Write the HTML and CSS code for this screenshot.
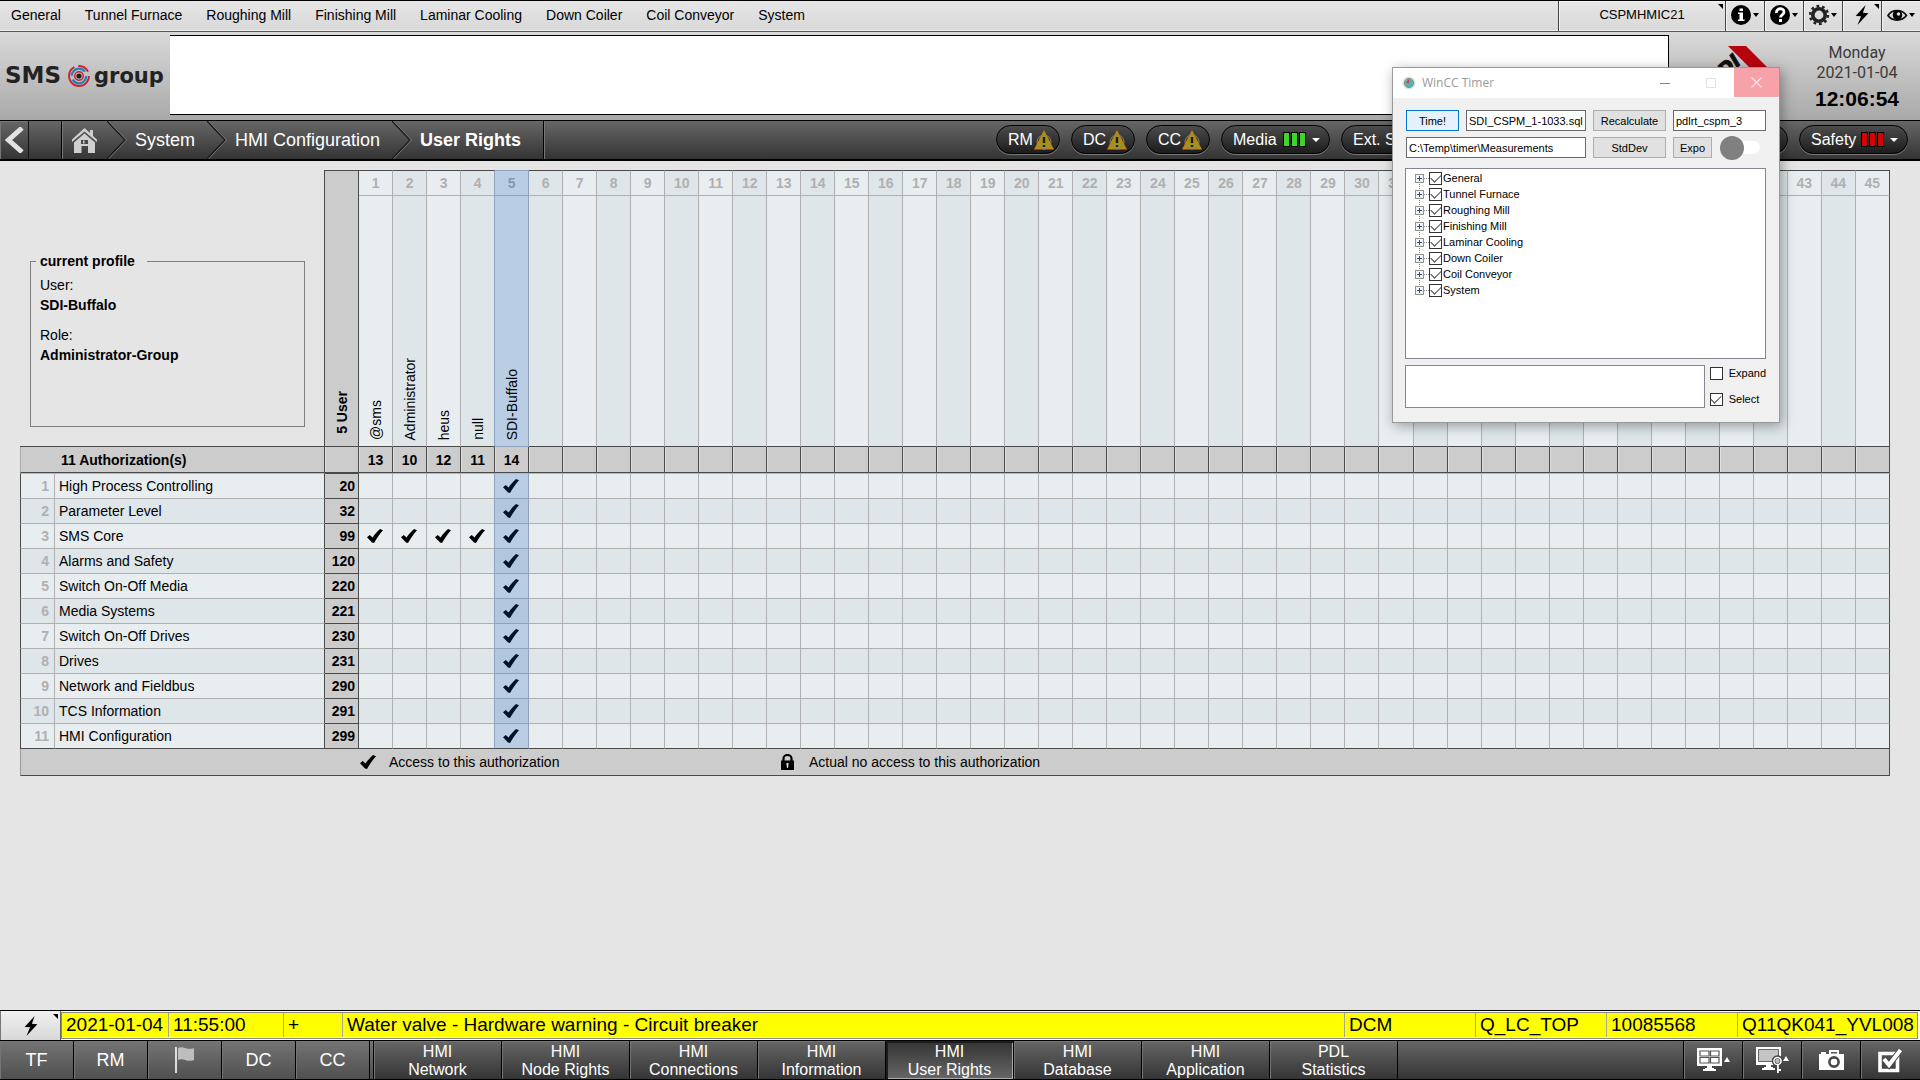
FILE: index.html
```html
<!DOCTYPE html>
<html lang="en">
<head>
<meta charset="utf-8">
<title>User Rights</title>
<link rel="stylesheet" href="styles.css">
</head>
<body>
<svg width="0" height="0" class="defs" aria-hidden="true">
  <symbol id="check" viewBox="0 0 16 14"><path d="M0 8.200L2.800 6L5.500 8.600C8 5 10 2.500 13 0L16 1.200C12.500 5 9.500 9.500 7 14L5 13.600Z" fill="currentColor"/></symbol>
  <symbol id="bolt" viewBox="0 0 16 22"><path d="M12 0L1 12l6 .5L3 22 15 9l-6-.6z" fill="currentColor"/></symbol>
  <symbol id="warn" viewBox="0 0 20 20"><path d="M10 0L20 19.500H0z" fill="#c9820f"/><path d="M10 2L17.500 17.500H2.500z" fill="#a3921a"/><circle cx="10" cy="12" r="7" fill="none" stroke="#8d8a5c" stroke-width="1"/><path d="M10 7v6M10 15v2" stroke="#1c1c10" stroke-width="2.400"/></symbol>
  <symbol id="chevron" viewBox="0 0 20 38"><path d="M0 0L18 19L0 38" fill="none" stroke="#1a1a1a" stroke-width="1.500"/><path d="M1.500 0L19.500 19L1.500 38" fill="none" stroke="#777" stroke-width="1"/></symbol>
</svg>

<header>
  <div class="topbar">
    <nav class="menu">
      <button>General</button><button>Tunnel Furnace</button><button>Roughing Mill</button><button>Finishing Mill</button><button>Laminar Cooling</button><button>Down Coiler</button><button>Coil Conveyor</button><button>System</button>
    </nav>
    <button class="station corner">CSPMHMIC21</button>
    <button class="tool" aria-label="Information"><svg width="29" height="22" viewBox="0 0 29 22"><circle cx="10" cy="11" r="10"/><path d="M7 8.500h5v7h1.500V17H7v-1.500h1.500V10H7zM8.500 4.500h3.500V7H8.500z" fill="#fff"/><path d="M22 9h6l-3 4z"/></svg></button>
    <button class="tool" aria-label="Help"><svg width="29" height="22" viewBox="0 0 29 22"><circle cx="10" cy="11" r="10"/><path d="M6.500 9C6 3.500 14 3.500 14 8c0 3-3.500 2.800-3.500 5.500" fill="none" stroke="#fff" stroke-width="2.800"/><path d="M9 15h3v3H9z" fill="#fff"/><path d="M22 9h6l-3 4z"/></svg></button>
    <button class="tool" aria-label="Settings"><svg width="29" height="22" viewBox="0 0 29 22"><circle cx="10" cy="11" r="6.200" fill="#ddd" stroke="#222" stroke-width="3.600"/><circle cx="10" cy="11" r="9" fill="none" stroke="#222" stroke-width="2.400" stroke-dasharray="2.800 2.855"/><path d="M22 9h6l-3 4z"/></svg></button>
    <button class="tool corner" aria-label="Events"><svg width="16" height="20"><use href="#bolt"/></svg></button>
    <button class="tool" aria-label="View"><svg width="29" height="22" viewBox="0 0 29 22"><path d="M1 11.500C5 5 15 5 19.500 11.500C15 17.500 5 17.500 1 11.500z" fill="none" stroke="#111" stroke-width="1.800"/><circle cx="10.500" cy="11" r="4.800"/><circle cx="11.500" cy="10" r="1.800" fill="#ddd"/><path d="M22 9h6l-3 4z"/></svg></button>
  </div>

  <div class="banner">
    <svg class="logo" width="170" height="40" viewBox="0 0 170 40" role="img" aria-label="SMS group">
      <text x="5" y="27" class="logo-sms">SMS</text>
      <circle cx="79" cy="20" r="2.600" fill="#222"/>
      <circle cx="79" cy="20" r="4.300" fill="none" stroke="#d11f2c" stroke-width="1.500"/>
      <circle cx="79" cy="20" r="7.300" fill="none" stroke="#1f82bd" stroke-width="2.200" stroke-dasharray="19 4 18 5"/>
      <circle cx="79" cy="20" r="10" fill="none" stroke="#d11f2c" stroke-width="1.800" stroke-dasharray="42 4 12 5"/>
      <text x="94" y="27" class="logo-group">group</text>
    </svg>
    <div class="message"></div>
    <svg class="customer" width="100" height="74" viewBox="0 0 100 74" role="img" aria-label="SDI">
      <path d="M34 5h18l31 31H65z" fill="#b8040f"/>
      <text x="48" y="22" text-anchor="end" transform="rotate(-42 48 22)" class="logo-sdi">SDI</text>
    </svg>
    <div class="clock"><div>Monday</div><div>2021-01-04</div><strong>12:06:54</strong></div>
  </div>

  <div class="navbar">
    <button class="back" aria-label="Back"><svg width="20" height="26" viewBox="0 0 20 26"><path d="M18 1L4.500 13L18 25" fill="none" stroke="#e2e2e2" stroke-width="5"/></svg></button>
    <div class="blank"></div>
    <nav class="crumbs">
      <a href="#" class="home" aria-label="Home"><svg width="25" height="25" viewBox="0 0 25 25" fill="#cfcfcf"><path d="M12.500 0L18 5V2h3v6l4 3.500v2.500L12.500 3.500L0 14v-2.500z"/><path d="M12.500 5.500L23 14.500V25h-7v-7H9.500v7H2V14.500z"/><path d="M9 12h7v4H9z" fill="#484848"/><path d="M11 12.500h1.500v3H11z"/></svg></a>
      <svg width="20" height="38"><use href="#chevron"/></svg>
      <a href="#">System</a><svg width="20" height="38"><use href="#chevron"/></svg>
      <a href="#">HMI Configuration</a><svg width="20" height="38"><use href="#chevron"/></svg>
      <a href="#" class="current" aria-current="page">User Rights</a>
    </nav>
    <div class="pills">
      <button class="pill">RM<svg width="20" height="20"><use href="#warn"/></svg></button>
      <button class="pill">DC<svg width="20" height="20"><use href="#warn"/></svg></button>
      <button class="pill">CC<svg width="20" height="20"><use href="#warn"/></svg></button>
      <button class="pill status ok">Media<span class="bars"><i></i><i></i><i></i></span><span class="down"></span></button>
      <button class="pill status ext">Ext. Systems</button>
      <button class="pill status alarm">Safety<span class="bars"><i></i><i></i><i></i></span><span class="down"></span></button>
    </div>
  </div>
</header>

<main>
  <table class="rights">
    <colgroup id="cols"><col class="c-index"><col class="c-name"><col class="c-code"></colgroup>
    <thead>
      <tr class="numbers" id="numbers">
        <td colspan="2" rowspan="2" class="profile-cell">
          <fieldset class="profile">
            <legend>current profile</legend>
            <dl><dt>User:</dt><dd>SDI-Buffalo</dd><dt>Role:</dt><dd>Administrator-Group</dd></dl>
          </fieldset>
        </td>
        <th rowspan="2" class="user-count"><span class="vertical">5 User</span></th>
      </tr>
      <tr class="users" id="users"></tr>
      <tr class="levels" id="levels"><th colspan="2" class="auth-count">11 Authorization(s)</th><th></th></tr>
    </thead>
    <tbody id="rows"></tbody>
    <tfoot><tr><td id="legend"><div class="key">
      <span class="key-access"><svg width="16" height="14"><use href="#check"/></svg>Access to this authorization</span>
      <span class="key-locked"><svg width="13" height="16" viewBox="0 0 13 16"><path d="M2.500 7V4.500a4 3.500 0 0 1 8 0V7" fill="none" stroke="#000" stroke-width="2.200"/><path d="M0 6.500h13V16H0z"/><path d="M5.500 9h2v1.500l-.5 3.500h-1l-.5-3.500z" fill="#ddd"/></svg>Actual no access to this authorization</span>
    </div></td></tr></tfoot>
  </table>
</main>

<footer>
  <div class="alarm-row">
    <button class="alarm-button corner" aria-label="Alarms"><svg width="16" height="20"><use href="#bolt"/></svg></button>
    <div class="alarm-frame">
      <table class="alarms">
        <colgroup><col class="a-date"><col class="a-time"><col class="a-state"><col><col class="a-area"><col class="a-area"><col class="a-area"><col class="a-tag"></colgroup>
        <tbody><tr><td>2021-01-04</td><td>11:55:00</td><td>+</td><td>Water valve - Hardware warning - Circuit breaker</td><td>DCM</td><td>Q_LC_TOP</td><td>10085568</td><td>Q11QK041_YVL008</td></tr></tbody>
      </table>
    </div>
  </div>
  <div class="taskbar">
    <div class="areas">
      <button>TF</button><button>RM</button>
      <button aria-label="Flag"><svg width="20" height="28" viewBox="0 0 20 28"><path d="M0 1h2v26H0z" fill="#ddd"/><path d="M3 2c5-3 9 3 16 0v12c-7 3-11-3-16 0z" fill="#bdbdbd"/></svg></button>
      <button>DC</button><button>CC</button>
    </div>
    <nav class="pages">
      <button>HMI<br>Network</button><button>HMI<br>Node Rights</button><button>HMI<br>Connections</button><button>HMI<br>Information</button><button class="active">HMI<br>User Rights</button><button>HMI<br>Database</button><button>HMI<br>Application</button><button>PDL<br>Statistics</button>
    </nav>
    <div class="actions">
      <button aria-label="Screens"><svg width="33" height="24" viewBox="0 0 33 24" fill="#fff"><path d="M0 0h25v18H0zM8 20h9v1h2v2H6v-2h2zM10 18h5v2h-5z"/><path d="M3 3h9v5H3zM13.500 3H22v5h-8.500zM3 9.500h9V15H3zM13.500 9.500H22V15h-8.500z" fill="#fff" stroke="#555" stroke-width="1.200"/><path d="M27 14h6l-3-5z"/></svg></button>
      <button aria-label="Screen access"><svg width="33" height="27" viewBox="0 0 33 27" fill="#fff"><path d="M0 0h25v18H0zM8 20h9v1h2v2H6v-2h2zM10 18h5v2h-5z"/><path d="M2.500 2.500h20v12h-20z" fill="#c4c4c4" stroke="#666"/><circle cx="21.500" cy="14" r="4" fill="#bbb" stroke="#444" stroke-width="3.500"/><circle cx="21.500" cy="14" r="3.600" fill="none" stroke="#fff" stroke-width="1.500"/><path d="M21 17.500h1.800V26H21zM22 22h3v2h-3z"/><path d="M27 14h6l-3-5z"/></svg></button>
      <button aria-label="Screenshot"><svg width="25" height="20" viewBox="0 0 25 20"><path d="M0 4h2V2h5v2h3V0h10v4h5v16H0z" fill="#fff"/><path d="M12 2h6v1.500h-6z" fill="#555"/><circle cx="15" cy="12" r="4.600" fill="#fff" stroke="#4a4a4a" stroke-width="2.600"/></svg></button>
      <button aria-label="Acknowledge"><svg width="25" height="25" viewBox="0 0 25 25"><path d="M2 5.500h17.500v17H2z" fill="none" stroke="#fff" stroke-width="3.600"/><path d="M6 11l5 6L22.500 2" fill="none" stroke="#4a4a4a" stroke-width="6"/><path d="M6 11l5 6L22.500 2" fill="none" stroke="#fff" stroke-width="4"/></svg></button>
    </div>
  </div>
</footer>

<section class="window" aria-label="WinCC Timer">
  <div class="titlebar">
    <svg width="14" height="14" viewBox="0 0 14 14"><circle cx="7" cy="7" r="6.500" fill="#d5e9d2"/><circle cx="7" cy="7" r="4.600" fill="#4fb5b8" stroke="#8c8f86"/><path d="M7 3v4H4z" fill="#d23b4c"/></svg>
    <span class="title">WinCC Timer</span>
    <button aria-label="Minimize"><svg width="10" height="10"><path d="M0 5.500h10" stroke="#888"/></svg></button>
    <button aria-label="Maximize"><svg width="10" height="10"><path d="M.5.500h9v9h-9z" fill="none" stroke="#e2e2e2"/></svg></button>
    <button class="close" aria-label="Close"><svg width="11" height="11"><path d="M.5.500l10 10M10.500.500l-10 10" stroke="#fff" stroke-opacity=".7" stroke-width="1.200"/></svg></button>
  </div>
  <div class="window-body">
    <div class="controls">
      <button class="push default">Time!</button>
      <input class="field" aria-label="Script" value="SDI_CSPM_1-1033.sql">
      <button class="push">Recalculate</button>
      <input class="field" aria-label="Project" value="pdlrt_cspm_3">
      <input class="field wide" aria-label="Path" value="C:\Temp\timer\Measurements">
      <button class="push">StdDev</button>
      <div class="expo"><button class="push">Expo</button><button class="toggle" role="switch" aria-label="Toggle"></button></div>
    </div>
    <ul class="tree" id="tree"></ul>
    <div class="lower">
      <textarea aria-label="Output"></textarea>
      <div class="options">
        <label><input type="checkbox">Expand</label>
        <label><input type="checkbox" checked>Select</label>
      </div>
    </div>
  </div>
</section>
<script src="script.js"></script>
</body>
</html>
```
FILE: styles.css
```css
* { box-sizing: border-box; }
body {
  margin: 0;
  min-height: 100vh;
  display: flex;
  flex-direction: column;
  position: relative;
  overflow-x: hidden;
  background: #e5e5e5;
  color: #000;
  font: 14px/20px "Liberation Sans", Arial, sans-serif;
}
button { font: inherit; color: inherit; margin: 0; padding: 0; border: 0; background: none; }
a { color: inherit; text-decoration: none; }
svg { display: block; flex: none; }
.defs { position: absolute; }

/* top menu */
.topbar {
  display: flex;
  height: 32px;
  border-top: 1px solid #000;
  border-bottom: 1px solid #555;
  box-shadow: inset 0 -1px #eee;
  background: linear-gradient(#e6e6e6, #d8d8d8);
}
.menu { flex: 1; display: flex; }
.menu button { padding: 0 13px 2px 11px; white-space: nowrap; }
.station, .tool {
  position: relative;
  display: flex;
  align-items: center;
  justify-content: center;
  border-left: 1px solid #444;
  box-shadow: inset 1px 1px #f4f4f4;
}
.station { width: 167px; font-size: 13px; padding-bottom: 2px; }
.tool { width: 39px; padding-bottom: 2px; }
.corner::after {
  content: "";
  position: absolute;
  top: 3px;
  right: 2px;
  border-top: 5px solid #000;
  border-left: 5px solid transparent;
}

/* banner */
.banner { display: flex; height: 88px; padding-top: 3px; background: linear-gradient(#d9d9d9, #a9a9a9); }
.logo { margin-top: 21px; }
.logo-sms, .logo-group { font-family: "DejaVu Sans", sans-serif; font-weight: bold; fill: #222; }
.logo-sms { font-size: 23px; }
.logo-group { font-size: 21px; }
.logo-sdi { font: italic bold 19px "DejaVu Sans", sans-serif; fill: #111; stroke: #111; stroke-width: 1px; }
.message { flex: 1; height: 80px; background: #fff; border: solid #000; border-width: 1px 1px 1px 0; }
.customer { margin: 6px 0 0 25px; }
.clock { width: 126px; padding-top: 8px; text-align: center; color: #3a3a3a; font: 16px/20px Roboto, sans-serif; }
.clock strong { display: block; padding-top: 4px; color: #000; font: bold 21px/24px "Liberation Sans", Arial, sans-serif; }

/* navigation */
.navbar {
  display: flex;
  height: 41px;
  border-top: 1px solid #000;
  border-bottom: 2px solid #000;
  background: linear-gradient(#666, #343434);
  color: #fff;
}
.back { width: 29px; display: flex; align-items: center; justify-content: center; border-right: 1px solid #111; box-shadow: inset 1px 1px #777; }
.blank { width: 33px; border-right: 1px solid #000; box-shadow: 1px 0 #777; }
.crumbs { display: flex; align-items: center; font-size: 18px; border-right: 1px solid #000; box-shadow: 1px 0 #777; }
.crumbs a { padding: 0 12px 0 8px; white-space: nowrap; }
.crumbs .home { padding: 0 10px; }
.crumbs .current { padding-right: 22px; font-weight: bold; }
.pills { flex: 1; display: flex; justify-content: flex-end; align-items: flex-start; gap: 11px; padding: 4px 12px 0 0; }
.pill {
  display: flex;
  align-items: center;
  gap: 1px;
  width: 64px;
  height: 29px;
  padding: 0 5px 0 11px;
  border: 1px solid #000;
  border-radius: 15px;
  background: linear-gradient(#4c4c4c, #1c1c1c);
  box-shadow: 0 1px #777;
  font-size: 16px;
  white-space: nowrap;
}
.pill.status { width: 109px; }
.pill.ext { width: 447px; }
.bars { display: flex; gap: 1px; margin-left: auto; padding-right: 5px; }
.bars i { width: 7px; height: 15px; border: 1px solid #000; }
.ok .bars i { background: #3fd52c; }
.alarm .bars i { background: #d90000; }
.down { margin-right: 4px; border: 4px solid transparent; border-top-color: #fff; border-bottom: 0; }

/* rights matrix */
main { flex: 1; padding: 9px 30px 0 20px; }
.rights { width: 100%; table-layout: fixed; border-collapse: separate; border-spacing: 0; }
.rights th, .rights td { padding: 0; border: solid #b0b0b0; border-width: 0 1px 1px 0; }
.c-index { width: 35px; }
.c-name { width: 270px; }
.c-code { width: 34px; }
.rights .profile-cell { border-right-color: #4a4a4a; border-bottom-color: #4a4a4a; vertical-align: top; padding: 81px 19px 0 10px; }
.profile { margin: 0; height: 176px; padding: 4px 9px; border: 1px solid #808080; }
.profile legend { padding: 0 12px 0 4px; margin-left: -4px; font-weight: bold; }
.profile dl { margin: 0; }
.profile dd { margin: 0 0 10px; font-weight: bold; }
.numbers th { height: 26px; border-top: 1px solid #4a4a4a; color: #b0b0b0; background: #e8eef0; }
.users th { height: 251px; vertical-align: bottom; font-weight: normal; background: #e8eef0; border-bottom-color: #4a4a4a; }
.numbers th.even, .users th.even { background: #dee6e9; }
.rights .numbers th { border-top-color: #4a4a4a; }
.rights .numbers .user-count { background: #ccc; color: #000; border-right-color: #4a4a4a; border-bottom-color: #4a4a4a; vertical-align: bottom; padding-bottom: 12px; }
.vertical { display: inline-block; writing-mode: vertical-rl; transform: rotate(180deg); line-height: 16px; vertical-align: bottom; white-space: nowrap; }
.users .vertical { margin-bottom: 6px; }
.levels th { height: 26px; background: #ccc; border-color: #4a4a4a; box-shadow: inset 1px 0 #e0e0e0; }
.levels .auth-count { text-align: left; padding-left: 40px; border-left: 1px solid #aaa; box-shadow: none; }
.rights .levels .auth-count { padding-left: 40px; border-left: 1px solid #aaa; }
.rights tbody td, .rights tbody th { height: 25px; background: #e8eef0; }
.rights tbody tr:nth-child(even) > * { background: #dee6e9; }
.rights tbody tr:first-child > * { height: 26px; border-top: 1px solid #b8b8b8; }
.rights tbody tr:last-child > * { border-bottom-color: #4a4a4a; }
.rights tbody .index { border-left: 1px solid #4a4a4a; text-align: right; padding-right: 5px; color: #b0b0b0; }
.rights tbody .name { text-align: left; font-weight: normal; padding-left: 4px; border-right-color: #4a4a4a; }
.rights tbody tr > .code { background: #ccc; border-color: #4a4a4a; text-align: right; padding-right: 3px; font-weight: bold; }
.rights tr > .selected { border-color: #8ea3bb; }
.numbers th.selected, .users th.selected, .rights tbody tr > .selected { background: #b9cee4; }
.numbers th.selected { color: #8399b0; }
.rights tbody tr:nth-child(even) > .selected { background: #b1c7de; }
.rights tr > .selected-before { border-right-color: #8ea3bb; }
.rights .levels > th { border-color: #4a4a4a; }
.rights tr > .last { border-right-color: #4a4a4a; }
.rights tbody svg { margin: 0 0 0 8px; }
.rights .selected svg { color: #001226; }
.rights tfoot td { height: 27px; background: #ccc; border: 1px solid #4a4a4a; border-top: 0; border-left-color: #999; }
.key { display: flex; padding-left: 339px; }
.key span { display: flex; align-items: center; }
.key-access { width: 421px; gap: 13px; }
.key-locked { gap: 15px; }

/* alarm line */
.alarm-row { display: flex; height: 30px; border-top: 1px solid #000; background: #fff; }
.alarm-button { position: relative; flex: none; width: 61px; display: flex; align-items: center; justify-content: center; border-left: 1px solid #777; border-right: 1px solid #666; background: linear-gradient(#f0f0f0, #d8d8d8); }
.alarm-frame { flex: 1; min-width: 0; margin: 1px 2px 1px 0; border: 1px solid #888; padding-bottom: 2px; overflow: hidden; }
.alarms { width: 100%; table-layout: fixed; border-collapse: separate; border-spacing: 0; background: #ff0; font-size: 19px; line-height: 24px; }
.alarms td { padding: 0 0 0 4px; border-right: 1px solid #a8a88a; white-space: nowrap; overflow: hidden; }
.alarms td:last-child { border-right: 0; }
.a-date { width: 107px; }
.a-time { width: 115px; }
.a-state { width: 59px; }
.a-area { width: 131px; }
.a-tag { width: 179px; }

/* task bar */
.taskbar { display: flex; height: 40px; border: solid #000; border-width: 1px 0; background: linear-gradient(#666, #343434); color: #fff; }
.taskbar button { display: flex; align-items: center; justify-content: center; text-align: center; border-right: 1px solid #000; box-shadow: inset 1px 1px #747474; }
.areas { display: flex; padding-right: 3px; border-right: 1px solid #000; background: linear-gradient(#747474, #505050); }
.areas button { width: 74px; font-size: 18px; }
.pages { flex: 1; display: flex; }
.pages button { width: 128px; padding-top: 1px; font-size: 16px; line-height: 18px; }
.pages .active { background: linear-gradient(#343434, #666); box-shadow: inset 2px 2px #1c1c1c, inset -1px -1px #aaa; }
.actions { display: flex; border-left: 1px solid #000; }
.actions button { width: 59px; }
.actions button:last-child { border-right: 0; }

/* floating tool window */
.window {
  position: absolute;
  top: 67px;
  right: 140px;
  width: 388px;
  border: 1px solid #999;
  background: #f0f0f0;
  box-shadow: 2px 3px 12px rgba(0, 0, 0, .35);
  font-size: 11px;
  line-height: 16px;
}
.titlebar { display: flex; align-items: center; height: 30px; padding-left: 9px; background: #fff; }
.title { flex: 1; padding-left: 6px; color: #999; font: 12px/16px "Open Sans", sans-serif; }
.titlebar button { width: 46px; height: 29px; align-self: flex-start; display: flex; align-items: center; justify-content: center; }
.titlebar .close { width: 45px; background: #f7a1a8; }
.window-body { padding: 12px 13px 14px 12px; }
.controls { display: grid; grid-template-columns: 53px 120px 73px 93px; grid-auto-rows: 21px; gap: 6px 7px; margin-left: 1px; }
.field { min-width: 0; width: 100%; height: 21px; padding: 0 2px; border: 1px solid #6a6a6a; background: #fff; font: inherit; color: #000; }
.wide { grid-column: span 2; }
.push { height: 21px; border: 1px solid #adadad; background: #e1e1e1; white-space: nowrap; }
.default { border-color: #0078d7; background: #e5f1fb; }
.expo { display: flex; align-items: center; gap: 8px; }
.expo .push { width: 39px; }
.toggle { position: relative; width: 40px; height: 13px; border-radius: 7px; background: #fff; }
.toggle::before { content: ""; position: absolute; left: 0; top: -5px; width: 24px; height: 24px; border-radius: 50%; background: #808080; }
.tree { height: 191px; margin: 10px 0 6px; padding: 1px 0 0 9px; list-style: none; border: 1px solid #828790; background: #fff; }
.tree li { display: flex; align-items: center; height: 16px; }
.tree li svg { width: 14px; height: 16px; }
.tree label { display: flex; align-items: center; gap: 1px; }
input[type="checkbox"] {
  appearance: none;
  width: 13px;
  height: 13px;
  margin: 0;
  border: 1px solid #333;
  background: #fff;
  display: grid;
  place-items: center;
}
input[type="checkbox"]:checked::before { content: ""; width: 9px; height: 5px; border: solid #444; border-width: 0 0 1px 1px; transform: translateY(-1px) rotate(-45deg); }
.lower { display: flex; gap: 5px; }
.lower textarea { width: 300px; height: 43px; margin: 0; border: 1px solid #828790; background: #fff; resize: none; font: inherit; }
.options { display: flex; flex-direction: column; gap: 10px; }
.options label { display: flex; align-items: center; gap: 6px; }
```
FILE: script.js
```js
const COLUMNS = 45;
const SELECTED = 5;
const users = [["@sms", 13], ["Administrator", 10], ["heus", 12], ["null", 11], ["SDI-Buffalo", 14]];
const rights = [
  ["High Process Controlling", 20], ["Parameter Level", 32], ["SMS Core", 99],
  ["Alarms and Safety", 120], ["Switch On-Off Media", 220], ["Media Systems", 221],
  ["Switch On-Off Drives", 230], ["Drives", 231], ["Network and Fieldbus", 290],
  ["TCS Information", 291], ["HMI Configuration", 299]
];
const areas = ["General", "Tunnel Furnace", "Roughing Mill", "Finishing Mill", "Laminar Cooling", "Down Coiler", "Coil Conveyor", "System"];
const check = '<svg width="16" height="14"><use href="#check"/></svg>';
const byId = id => document.getElementById(id);

function cells(tag, content) {
  let html = "";
  for (let n = 1; n <= COLUMNS; n++) {
    const names = [];
    if (n % 2 === 0) names.push("even");
    if (n === SELECTED) names.push("selected");
    if (n === SELECTED - 1) names.push("selected-before");
    if (n === COLUMNS) names.push("last");
    html += `<${tag} class="${names.join(" ")}">${content(n)}</${tag}>`;
  }
  return html;
}

byId("cols").insertAdjacentHTML("beforeend", "<col>".repeat(COLUMNS));
byId("numbers").insertAdjacentHTML("beforeend", cells("th", n => n));
byId("users").innerHTML = cells("th", n => users[n - 1] ? `<span class="vertical">${users[n - 1][0]}</span>` : "");
byId("levels").insertAdjacentHTML("beforeend", cells("th", n => users[n - 1] ? users[n - 1][1] : ""));
byId("rows").innerHTML = rights.map(([name, code], i) =>
  `<tr><th class="index">${i + 1}</th><th class="name">${name}</th><td class="code">${code}</td>` +
  cells("td", n => n === SELECTED || (code === 99 && n < SELECTED) ? check : "") + "</tr>").join("");
byId("legend").colSpan = COLUMNS + 3;

byId("tree").innerHTML = areas.map((name, i) =>
  `<li><svg viewBox="0 0 14 16"><path d="M4.500 ${i ? 0 : 8}V${i < areas.length - 1 ? 16 : 8}M9 8.500h5" stroke="#888" stroke-dasharray="1 1" fill="none"/>` +
  `<rect x=".5" y="4.500" width="8" height="8" fill="#f4f4f4" stroke="#919191"/><path d="M2 8.500h5M4.500 6v5" stroke="#2b4a9b"/></svg>` +
  `<label><input type="checkbox" checked>${name}</label></li>`).join("");
```
